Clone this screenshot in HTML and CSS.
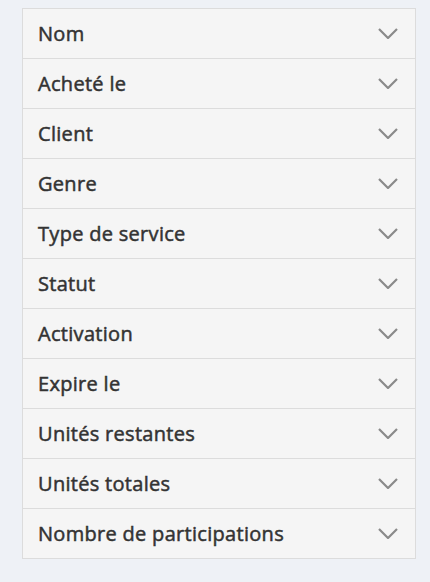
FILE: index.html
```html
<!DOCTYPE html>
<html lang="fr">
<head>
<meta charset="utf-8">
<link rel="stylesheet" href="styles.css">
</head>
<body>
<div class="panel">
  <div class="row"><span class="label">Nom</span><svg class="chev" viewBox="0 0 20 11"><path d="M1 1 L10 10 L19 1"/></svg></div>
  <div class="row"><span class="label">Acheté le</span><svg class="chev" viewBox="0 0 20 11"><path d="M1 1 L10 10 L19 1"/></svg></div>
  <div class="row"><span class="label">Client</span><svg class="chev" viewBox="0 0 20 11"><path d="M1 1 L10 10 L19 1"/></svg></div>
  <div class="row"><span class="label">Genre</span><svg class="chev" viewBox="0 0 20 11"><path d="M1 1 L10 10 L19 1"/></svg></div>
  <div class="row"><span class="label">Type de service</span><svg class="chev" viewBox="0 0 20 11"><path d="M1 1 L10 10 L19 1"/></svg></div>
  <div class="row"><span class="label">Statut</span><svg class="chev" viewBox="0 0 20 11"><path d="M1 1 L10 10 L19 1"/></svg></div>
  <div class="row"><span class="label">Activation</span><svg class="chev" viewBox="0 0 20 11"><path d="M1 1 L10 10 L19 1"/></svg></div>
  <div class="row"><span class="label">Expire le</span><svg class="chev" viewBox="0 0 20 11"><path d="M1 1 L10 10 L19 1"/></svg></div>
  <div class="row"><span class="label">Unités restantes</span><svg class="chev" viewBox="0 0 20 11"><path d="M1 1 L10 10 L19 1"/></svg></div>
  <div class="row"><span class="label">Unités totales</span><svg class="chev" viewBox="0 0 20 11"><path d="M1 1 L10 10 L19 1"/></svg></div>
  <div class="row"><span class="label">Nombre de participations</span><svg class="chev" viewBox="0 0 20 11"><path d="M1 1 L10 10 L19 1"/></svg></div>
</div>
</body>
</html>
```
FILE: styles.css
```css
html, body {
  margin: 0;
  background: #eef1f6;
}
body {
  padding: 8px 15px 0 22px;
  font-family: "Open Sans", sans-serif;
}
.panel {
  width: 392px;
  background: #f5f5f5;
  border: 1px solid #dcdcdc;
}
.row {
  height: 49px;
  display: flex;
  align-items: center;
  justify-content: space-between;
  padding: 0 17px 0 15px;
  border-top: 1px solid #dcdcdc;
}
.row:first-child {
  border-top: none;
}
.label {
  font-size: 20px;
  font-weight: 400;
  color: #333;
  -webkit-text-stroke: 0.5px #333;
  letter-spacing: 0.3px;
  line-height: 1;
}
.chev {
  width: 20px;
  height: 11px;
  fill: none;
  stroke: #8a8a8a;
  stroke-width: 2.2;
}
```
